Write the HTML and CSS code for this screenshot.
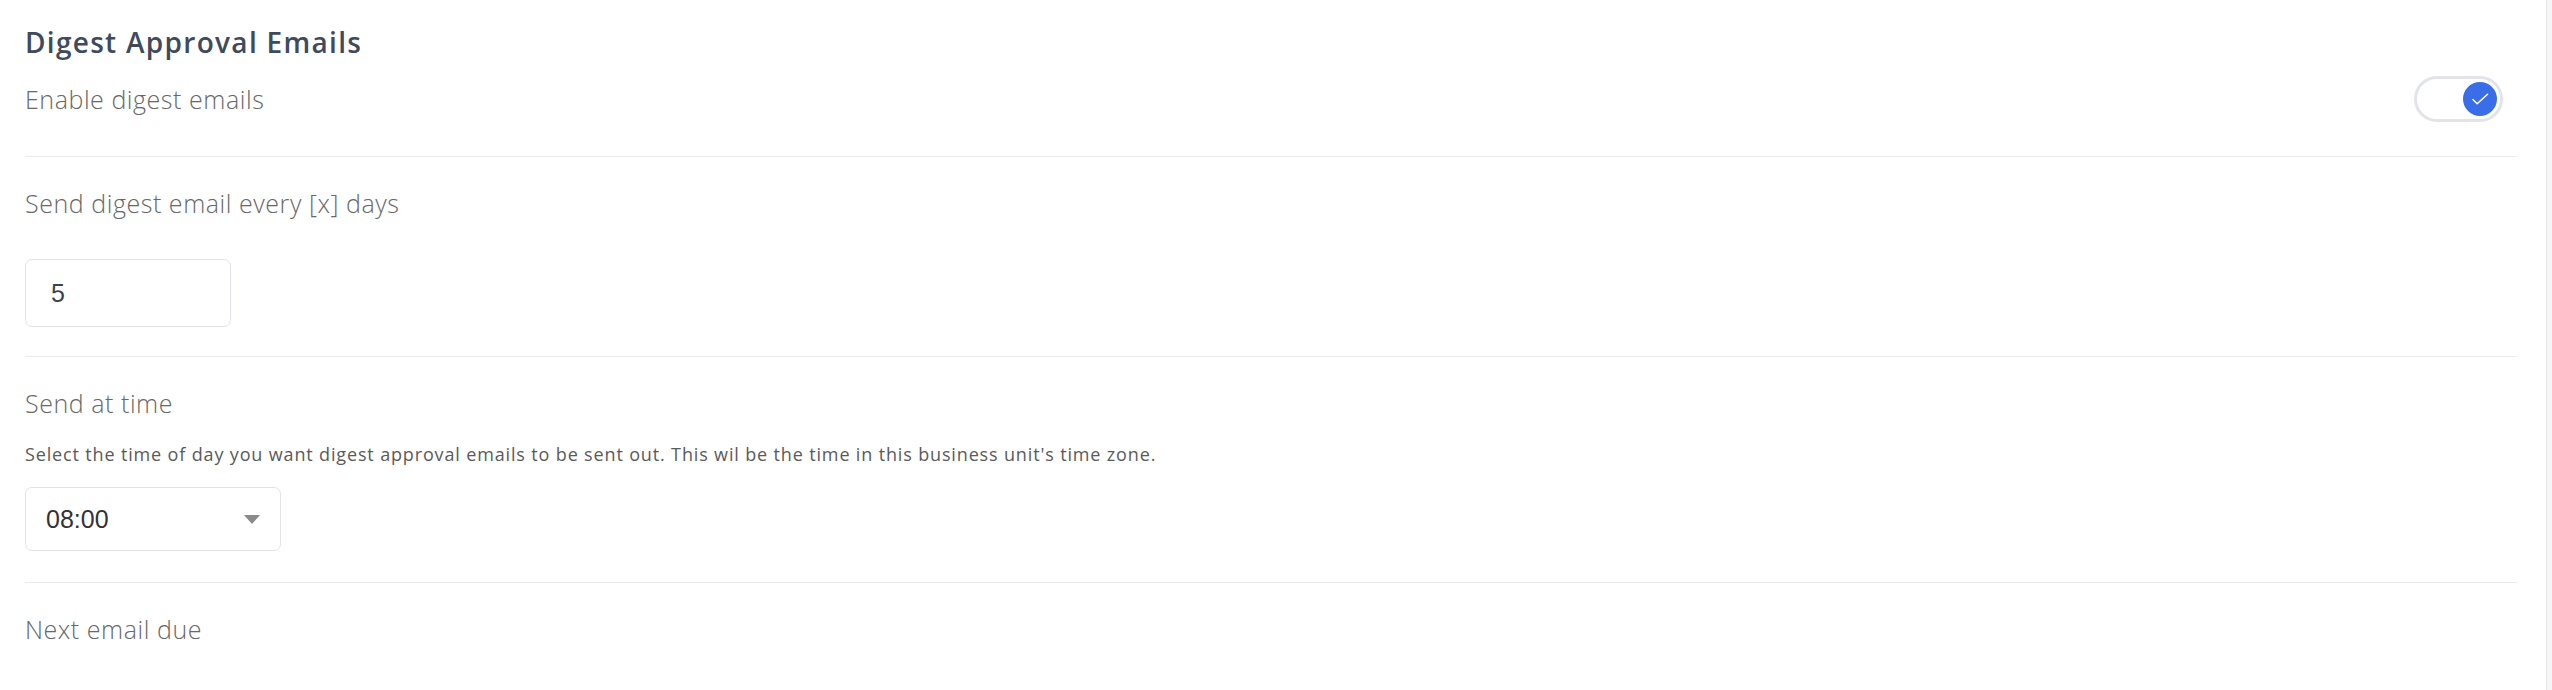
FILE: index.html
```html
<!DOCTYPE html>
<html lang="en">
<head>
    <meta charset="UTF-8">
    <meta name="viewport" content="width=device-width, initial-scale=1.0">
    <title>Digest Approval Emails</title>
    <link rel="stylesheet" href="styles.css">
</head>
<body>
    <div class="panel">
        <h2 class="title">Digest Approval Emails</h2>

        <div class="toggle-row">
            <span class="label">Enable digest emails</span>
            <span class="toggle is-on">
                <span class="knob">
                    <svg width="36" height="36" viewBox="0 0 36 36">
                        <path d="M10.5 18.5 L15 23 L26 13" fill="none" stroke="#fff" stroke-width="1.6" stroke-linecap="round" stroke-linejoin="round"/>
                    </svg>
                </span>
            </span>
        </div>

        <div class="section section-days">
            <div class="label">Send digest email every [x] days</div>
            <div class="field number-field">5</div>
        </div>

        <div class="section section-time">
            <div class="label">Send at time</div>
            <p class="help">Select the time of day you want digest approval emails to be sent out. This wil be the time in this business unit's time zone.</p>
            <div class="field select-field">
                <span>08:00</span>
                <span class="caret"></span>
            </div>
        </div>

        <div class="section section-next">
            <div class="label">Next email due</div>
        </div>
    </div>
</body>
</html>
```

FILE: styles.css
```css
:root {
    --title-color: #3f4b5b;
    --label-color: #686868;
    --divider: #ebebee;
    --field-border: #e2e2e8;
    --blue: #3a6ee8;
}

html, body {
    height: 100%;
}

body {
    margin: 0;
    background-color: #f6f6f9;
    font-family: "Open Sans", "Noto Sans", sans-serif;
}

.panel {
    min-height: 100%;
    margin-right: 5px;
    padding: 27px 29px 0 25px;
    background: white;
    border-right: 1px solid #e6e6ee;
    box-sizing: border-box;
}

.title {
    margin: 0;
    font-size: 28px;
    line-height: 30px;
    font-weight: 600;
    letter-spacing: 1.3px;
    color: var(--title-color);
}

.label {
    font-size: 25px;
    line-height: 30px;
    font-weight: 300;
    letter-spacing: 0.55px;
    color: var(--label-color);
}

.toggle-row {
    display: flex;
    align-items: center;
    justify-content: space-between;
    margin-top: 19px;
    padding-bottom: 34px;
    border-bottom: 1px solid var(--divider);
}

.toggle {
    display: flex;
    justify-content: flex-end;
    width: 89px;
    height: 46px;
    margin-right: 14px;
    padding: 3px;
    border: 3px solid #e3e4ea;
    border-radius: 23px;
    background: white;
    box-sizing: border-box;
}

.knob {
    display: block;
    width: 34px;
    height: 34px;
    border-radius: 50%;
    background-color: var(--blue);
}

.knob svg {
    display: block;
    width: 34px;
    height: 34px;
}

.section {
    padding-top: 31px;
    border-bottom: 1px solid var(--divider);
}

.section-days {
    padding-bottom: 29px;
}

.section-time {
    padding-bottom: 31px;
}

.section-next {
    border-bottom: none;
}

.field {
    display: flex;
    align-items: center;
    border: 1px solid var(--field-border);
    border-radius: 7px;
    box-sizing: border-box;
    font-family: "Liberation Sans", Arial, sans-serif;
    font-size: 25px;
}

.number-field {
    width: 206px;
    height: 68px;
    margin-top: 41px;
    padding-left: 25px;
    color: #3b4350;
}

.help {
    margin: 24px 0 0;
    font-size: 18px;
    line-height: 24px;
    letter-spacing: 0.85px;
    color: #5a5a5a;
}

.select-field {
    justify-content: space-between;
    width: 256px;
    height: 64px;
    margin-top: 21px;
    padding: 0 20px 0 20px;
    color: #333;
}

.caret {
    width: 0;
    height: 0;
    border-left: 8.5px solid transparent;
    border-right: 8.5px solid transparent;
    border-top: 9px solid #8a8a8a;
}
```
